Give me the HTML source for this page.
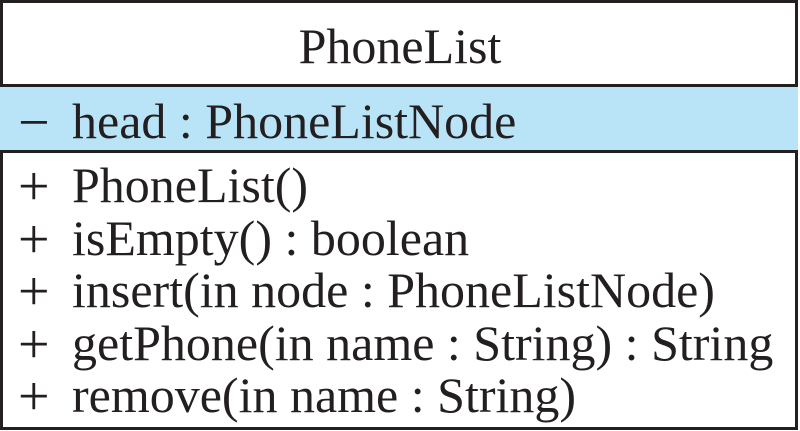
<!DOCTYPE html>
<html><head><style>
html,body{margin:0;padding:0;background:#fff;}
body{width:800px;height:431px;position:relative;overflow:hidden;font-family:"Liberation Serif",serif;color:#231f20;}
.box{position:absolute;left:0;top:0;width:792px;height:424px;border:3px solid #231f20;}
.attr{position:absolute;left:0;top:84px;width:798px;height:63px;background:#b9e4f7;border-top:3px solid #231f20;border-bottom:3px solid #231f20;}
.t{position:absolute;font-size:50px;line-height:50px;white-space:nowrap;}
.s{position:absolute;left:18px;font-size:56px;top:2px;}
.n{position:absolute;left:72px;}
</style></head><body>
<div class="box"></div>
<div class="attr"></div>
<div class="t" style="left:0;width:800px;text-align:center;top:21px;">PhoneList</div>
<div class="t" style="top:96px;width:800px"><span class="s">−</span><span class="n">head : PhoneListNode</span></div>
<div class="t" style="top:160px;width:800px"><span class="s">+</span><span class="n">PhoneList()</span></div>
<div class="t" style="top:213px;width:800px"><span class="s">+</span><span class="n">isEmpty() : boolean</span></div>
<div class="t" style="top:265px;width:800px"><span class="s">+</span><span class="n">insert(in node : PhoneListNode)</span></div>
<div class="t" style="top:318px;width:800px"><span class="s">+</span><span class="n">getPhone(in name : String) : String</span></div>
<div class="t" style="top:370px;width:800px"><span class="s">+</span><span class="n">remove(in name : String)</span></div>
</body></html>
